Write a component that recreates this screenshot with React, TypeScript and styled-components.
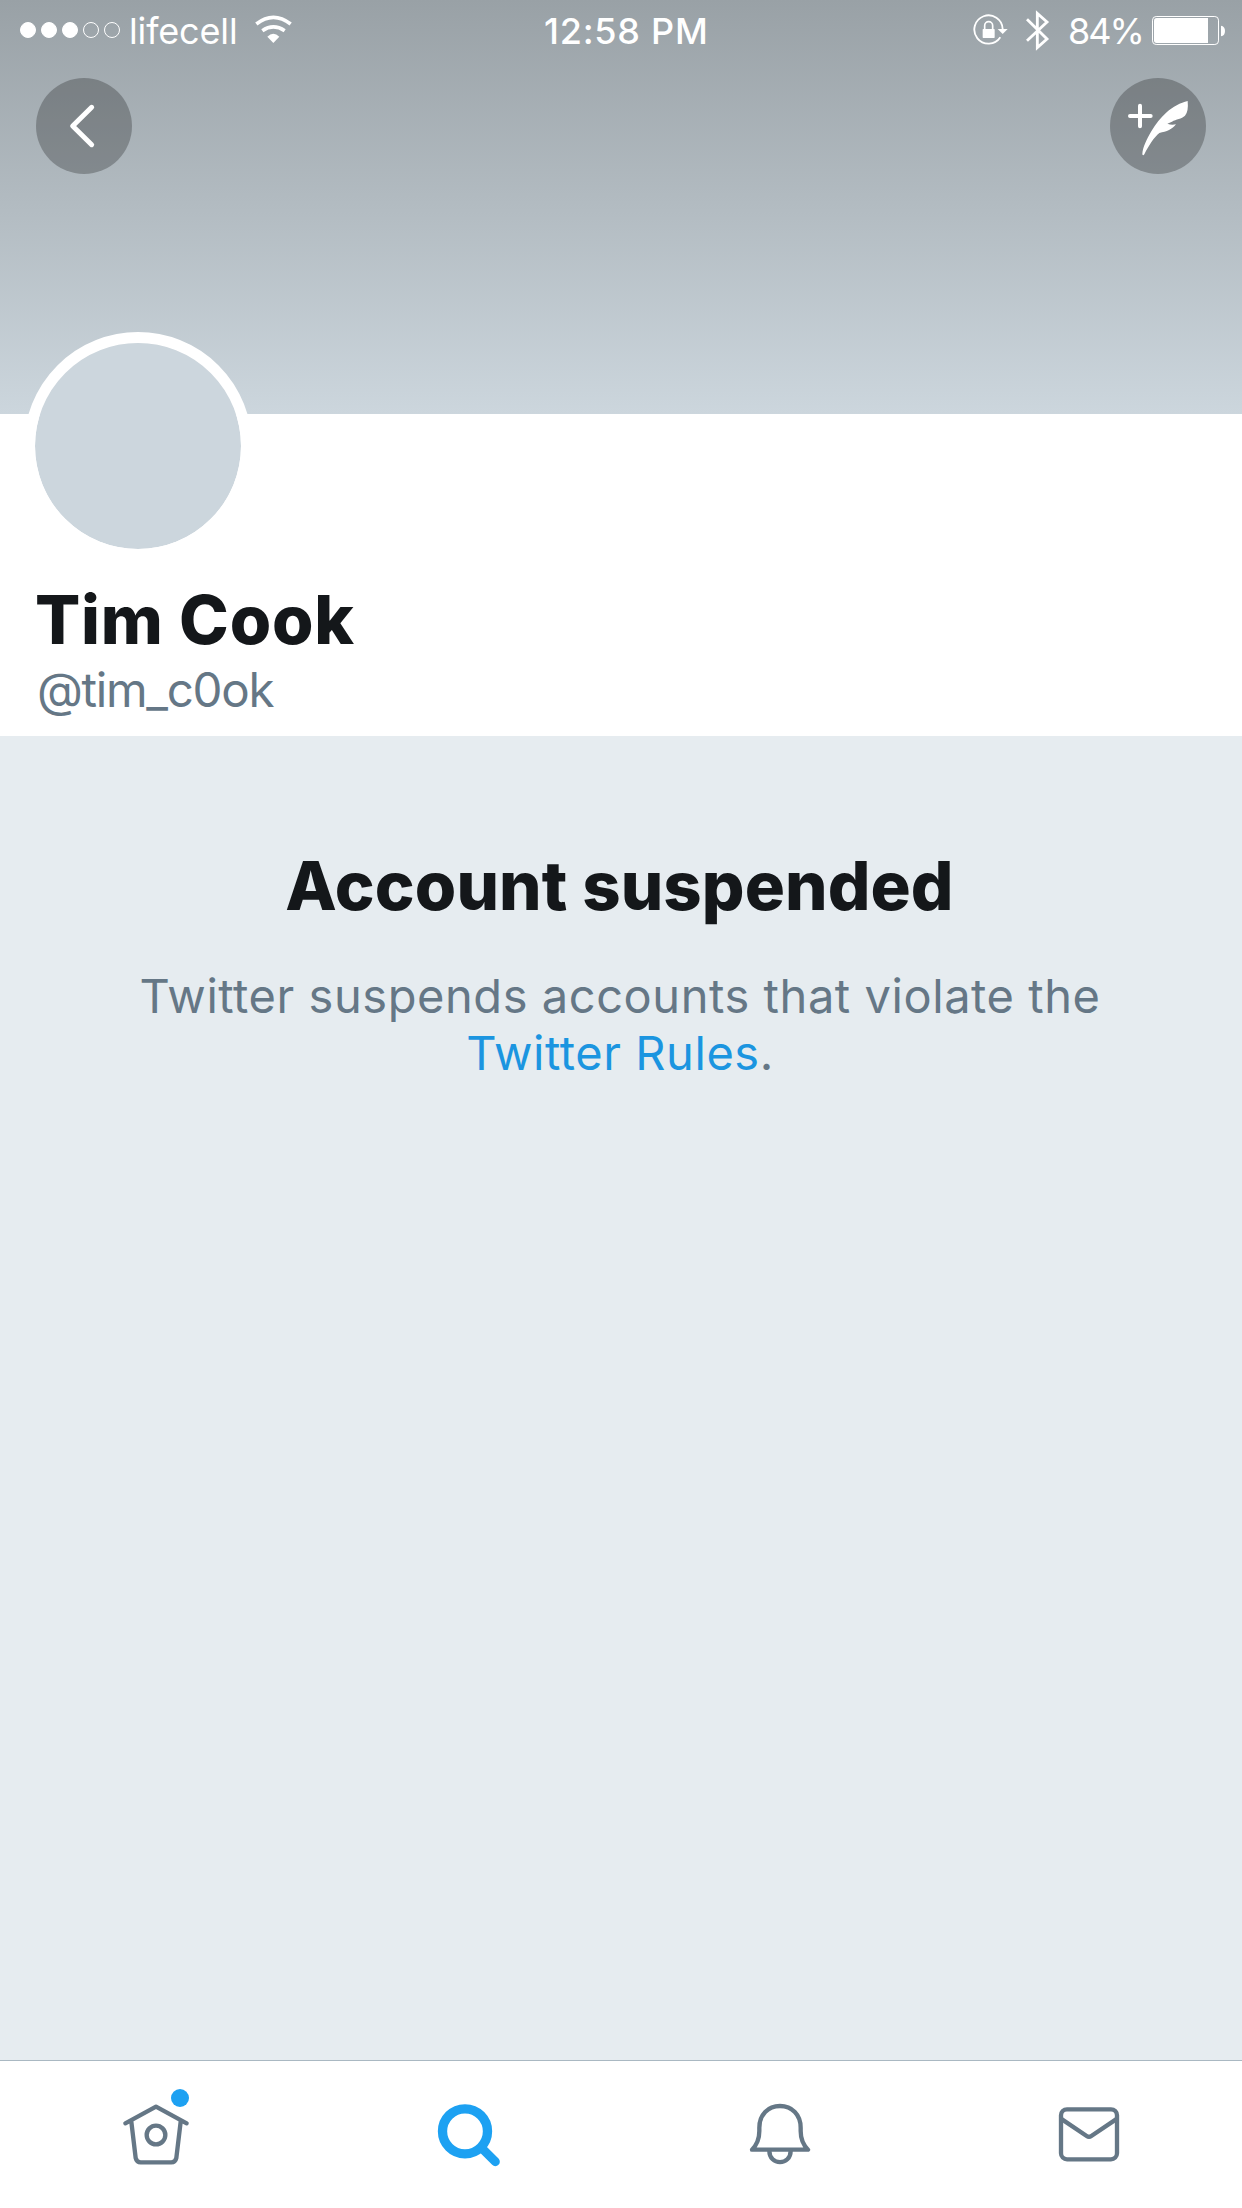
import React from "react";
import styled, { createGlobalStyle } from "styled-components";

const slate = "#657786";
const blue = "#1da1f2";

const GlobalStyle = createGlobalStyle`
  body {
    margin: 0;
    background: #e6ecf0;
    font-family: Inter, "Liberation Sans", sans-serif;
  }
`;

const Screen = styled.div`
  display: flex;
  flex-direction: column;
  width: 1242px;
  height: 2208px;
  overflow: hidden;
  background: #e6ecf0;
`;

const Banner = styled.header`
  flex: none;
  height: 414px;
  background: linear-gradient(#99a1a6, #ccd6dd);
`;

const StatusBar = styled.div`
  display: flex;
  align-items: flex-start;
  height: 78px;
  color: #fff;
`;

const Signal = styled.div`
  display: flex;
  gap: 5px;
  padding: 22px 0 0 20px;
  width: 129px;
  box-sizing: border-box;
`;

const Dot = styled.span<{ $on: boolean }>`
  flex: none;
  box-sizing: border-box;
  width: 16px;
  height: 16px;
  border: 1px solid #fff;
  border-radius: 50%;
  background: ${(p) => (p.$on ? "#fff" : "transparent")};
`;

const StatusText = styled.span<{ $width: number; $weight: number; $spacing: number }>`
  flex: none;
  width: ${(p) => p.$width}px;
  padding-top: 9px;
  font-size: 36px;
  line-height: 44px;
  font-weight: ${(p) => p.$weight};
  letter-spacing: ${(p) => p.$spacing}px;
  white-space: nowrap;
`;

const StatusIcon = styled.svg`
  flex: none;
  display: block;
`;

const Indicators = styled.div`
  display: flex;
  align-items: flex-start;
  gap: 15px;
  padding-right: 15px;
`;

const Power = styled.div`
  display: flex;
  align-items: flex-start;
  margin-left: 1px;
`;

const Spacer = styled.div`
  flex: 1;
`;

const Toolbar = styled.div`
  display: flex;
  justify-content: space-between;
  padding: 0 36px;
`;

const RoundButton = styled.button`
  width: 96px;
  height: 96px;
  padding: 0;
  border: 0;
  border-radius: 50%;
  background: rgba(0, 0, 0, 0.25);

  svg {
    display: block;
  }
`;

const Profile = styled.section`
  flex: none;
  box-sizing: border-box;
  height: 322px;
  padding-left: 36px;
  background: #fff;
`;

const Avatar = styled.div`
  width: 206px;
  height: 206px;
  margin: -82px 0 20px -12px;
  border: 11px solid #fff;
  border-radius: 50%;
  background: #ccd6dd;
  background-clip: padding-box;
`;

const Name = styled.h1`
  margin: 0 0 0 -1px;
  color: #14171a;
  font-size: 67px;
  line-height: 80px;
  font-weight: 800;
  letter-spacing: 0.75px;
`;

const Handle = styled.p`
  margin: 1px 0 0 1px;
  color: ${slate};
  font-size: 47.5px;
  line-height: 58px;
  letter-spacing: -1.3px;
`;

const Notice = styled.main`
  flex: 1;
  padding-top: 110px;
  text-align: center;
`;

const NoticeTitle = styled.h2`
  margin: 0 0 41px;
  padding-right: 3px;
  color: #14171a;
  font-size: 67px;
  line-height: 80px;
  font-weight: 800;
  letter-spacing: 0.1px;
`;

const NoticeText = styled.p`
  width: 1000px;
  margin: 0 auto;
  padding-right: 2px;
  color: ${slate};
  font-size: 47px;
  line-height: 57px;
  letter-spacing: 0.56px;
`;

const RulesLink = styled.a`
  color: #1b95e0;
  text-decoration: none;
`;

const TabBar = styled.nav`
  flex: none;
  display: grid;
  grid-template-columns: 311px 311px 311px 309px;
  height: 147px;
  border-top: 1px solid #aab8c2;
  background: #fff;
`;

const Tab = styled.button`
  display: flex;
  justify-content: center;
  padding: 0;
  border: 0;
  background: none;
`;

const TabGlyph = styled.svg`
  display: block;
  width: 111px;
  height: 147px;
  fill: none;
  stroke: ${slate};
  stroke-width: 13;
  stroke-linecap: round;
  stroke-linejoin: round;
`;

const WifiIcon = () => (
  <StatusIcon width="40" height="60" viewBox="762 0 120 180" fill="none">
    <path d="M769 72Q820 32 872 72" stroke="#fff" strokeWidth="11" />
    <path d="M787 92Q820 69 854 92" stroke="#fff" strokeWidth="11" />
    <path d="M802 110Q820 93 838 110L820 129Z" fill="#fff" />
  </StatusIcon>
);

const LockIcon = () => (
  <StatusIcon width="36" height="60" viewBox="70 0 108 180" fill="none" stroke="#fff">
    <path d="M152 112A42.5 42.5 0 1 1 159 87" strokeWidth="5.5" />
    <path d="M144 87H174L159 102Z" fill="#fff" stroke="none" />
    <path d="M105 88V77A12 12 0 0 1 129 77V88" strokeWidth="5" />
    <rect x="99" y="87" width="36" height="27" rx="2" fill="#fff" stroke="none" />
  </StatusIcon>
);

const BluetoothIcon = () => (
  <StatusIcon width="28" height="60" viewBox="222 0 84 180" fill="none">
    <path d="M231 58L291 117L262 143V40L291 66L231 122" stroke="#fff" strokeWidth="8.5" />
  </StatusIcon>
);

const BatteryIcon = () => (
  <StatusIcon width="76" height="60" viewBox="603 0 228 180">
    <rect x="607.5" y="49.5" width="198" height="84" rx="11" fill="none" stroke="#fff" strokeWidth="3" />
    <path d="M620 54H774V129H620Q612 129 612 121V62Q612 54 620 54Z" fill="#fff" />
    <path d="M813 77Q825 79 825 93Q825 107 813 109Z" fill="#fff" />
  </StatusIcon>
);

const BackIcon = () => (
  <svg width="96" height="96" viewBox="108 234 288 288" fill="none">
    <path
      d="M275 322L218 378L275 434"
      stroke="#fff"
      strokeWidth="15"
      strokeLinecap="round"
      strokeLinejoin="round"
    />
  </svg>
);

const ComposeIcon = () => (
  <svg width="96" height="96" viewBox="480 234 288 288" fill="none">
    <path d="M570 317V379M540 348H602" stroke="#fff" strokeWidth="12" strokeLinecap="round" />
    <path
      d="M713 303C692 308 668 320 650 337C632 353 617 373 604 394C590 418 578 442 577 463Q579 469 583 463C596 437 612 412 628 399C650 395 667 388 678 373Q664 376 652 371C657 368 661 368 666 365C678 357 695 357 705 347Q716 335 713 303Z"
      fill="#fff"
    />
  </svg>
);

const App = () => (
  <>
    <GlobalStyle />
    <Screen>
      <Banner>
        <StatusBar>
          <Signal>
            {[true, true, true, false, false].map((on, i) => (
              <Dot key={i} $on={on} />
            ))}
          </Signal>
          <StatusText $width={125} $weight={400} $spacing={-0.15}>
            lifecell
          </StatusText>
          <WifiIcon />
          <Spacer />
          <StatusText $width={429} $weight={500} $spacing={0.75}>
            12:58 PM
          </StatusText>
          <Indicators>
            <LockIcon />
            <BluetoothIcon />
            <Power>
              <StatusText $width={83} $weight={400} $spacing={-2}>
                84%
              </StatusText>
              <BatteryIcon />
            </Power>
          </Indicators>
        </StatusBar>
        <Toolbar>
          <RoundButton aria-label="Back">
            <BackIcon />
          </RoundButton>
          <RoundButton aria-label="Compose">
            <ComposeIcon />
          </RoundButton>
        </Toolbar>
      </Banner>
      <Profile>
        <Avatar />
        <Name>Tim Cook</Name>
        <Handle>@tim_c0ok</Handle>
      </Profile>
      <Notice>
        <NoticeTitle>Account suspended</NoticeTitle>
        <NoticeText>
          Twitter suspends accounts that violate the <RulesLink>Twitter Rules</RulesLink>.
        </NoticeText>
      </Notice>
      <TabBar>
        <Tab aria-label="Home">
          <TabGlyph viewBox="0 33 333 441">
            <path d="M76 220L168 170L260 220M94 215L107 324Q110 337 122 337H214Q226 337 229 324L242 215" />
            <circle cx="168" cy="255" r="28" />
            <circle cx="240" cy="144" r="27" fill={blue} stroke="none" />
          </TabGlyph>
        </Tab>
        <Tab aria-label="Search">
          <TabGlyph viewBox="-27 -57 333 441">
            <circle cx="135" cy="154" r="67.5" stroke={blue} strokeWidth="28" />
            <path d="M186 205L226 245" stroke={blue} strokeWidth="27" />
          </TabGlyph>
        </Tab>
        <Tab aria-label="Notifications">
          <TabGlyph viewBox="-24 -57 333 441">
            <path d="M66 209C80 195 88 177 88 153V143C88 104 114 78 150 78S212 104 212 143V153C212 177 220 195 234 209Z" />
            <path d="M118 212C118 258 182 258 182 212" />
          </TabGlyph>
        </Tab>
        <Tab aria-label="Messages">
          <TabGlyph viewBox="-24 33 333 441">
            <rect x="63" y="178" width="168" height="150" rx="18" />
            <path d="M66 208L140 258Q147 263 154 258L228 208" />
          </TabGlyph>
        </Tab>
      </TabBar>
    </Screen>
  </>
);

export default App;
